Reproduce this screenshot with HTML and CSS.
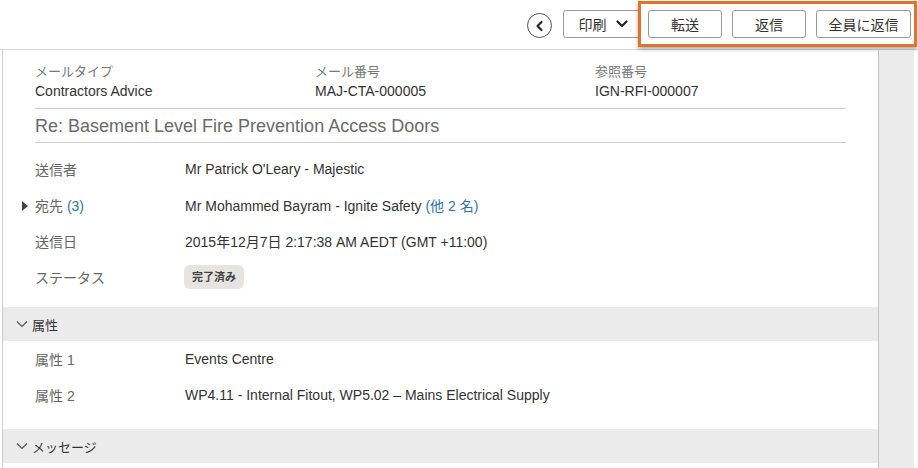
FILE: index.html
```html
<!DOCTYPE html>
<html lang="ja">
<head>
<meta charset="utf-8">
<link rel="stylesheet" href="styles.css">
</head>
<body>
<div class="toolbar">
  <button class="back" aria-label="戻る">
    <svg width="12" height="12" viewBox="0 0 12 12"><path d="M7.5 2 L3.5 6 L7.5 10" fill="none" stroke="#222" stroke-width="2.2" stroke-linecap="round" stroke-linejoin="round"/></svg>
  </button>
  <button class="btn print">印刷
    <svg width="12" height="10" viewBox="0 0 12 10"><path d="M1.5 2.5 L6 7 L10.5 2.5" fill="none" stroke="#222" stroke-width="2.2" stroke-linecap="round" stroke-linejoin="round"/></svg>
  </button>
  <div class="highlight">
    <button class="btn b-fwd">転送</button>
    <button class="btn b-reply">返信</button>
    <button class="btn b-all">全員に返信</button>
  </div>
</div>
<div class="main">
  <div class="panel">
    <div class="meta">
      <div class="meta-item"><div class="meta-label">メールタイプ</div><div class="meta-value">Contractors Advice</div></div>
      <div class="meta-item"><div class="meta-label">メール番号</div><div class="meta-value">MAJ-CTA-000005</div></div>
      <div class="meta-item"><div class="meta-label">参照番号</div><div class="meta-value">IGN-RFI-000007</div></div>
    </div>
    <div class="subject">Re: Basement Level Fire Prevention Access Doors</div>
    <div class="rows">
      <div class="row"><div class="label">送信者</div><div class="value">Mr Patrick O'Leary - Majestic</div></div>
      <div class="row"><div class="label"><span class="tri"></span>宛先 <span class="link">(3)</span></div><div class="value">Mr Mohammed Bayram - Ignite Safety <span class="link">(他 2 名)</span></div></div>
      <div class="row"><div class="label">送信日</div><div class="value">2015年12月7日 2:17:38 AM AEDT (GMT +11:00)</div></div>
      <div class="row"><div class="label">ステータス</div><div class="value"><span class="badge">完了済み</span></div></div>
    </div>
    <div class="section">
      <svg width="12" height="8" viewBox="0 0 12 8"><path d="M1 1.5 L6 6.5 L11 1.5" fill="none" stroke="#555" stroke-width="1.2"/></svg>
      <span>属性</span>
    </div>
    <div class="rows attrs">
      <div class="row"><div class="label">属性 1</div><div class="value">Events Centre</div></div>
      <div class="row"><div class="label">属性 2</div><div class="value">WP4.11 - Internal Fitout, WP5.02 – Mains Electrical Supply</div></div>
    </div>
    <div class="section">
      <svg width="12" height="8" viewBox="0 0 12 8"><path d="M1 1.5 L6 6.5 L11 1.5" fill="none" stroke="#555" stroke-width="1.2"/></svg>
      <span>メッセージ</span>
    </div>
  </div>
  <div class="side"></div>
</div>
</body>
</html>
```
FILE: styles.css
```css
* { box-sizing: border-box; }
html, body { margin: 0; padding: 0; background: #fff; overflow: hidden; }
body {
  width: 918px; height: 468px;
  font-family: "Liberation Sans", "Noto Sans CJK JP", Arial, sans-serif;
  color: #333;
  font-size: 14px;
}
button { font-family: inherit; margin: 0; }
.toolbar {
  height: 50px;
  border-bottom: 1px solid #d6d6d6;
  display: flex;
  justify-content: flex-end;
  align-items: flex-start;
  padding-right: 1px;
}
.back {
  width: 25px; height: 25px;
  margin-top: 13px;
  border: 1px solid #555;
  border-radius: 50%;
  background: #fff;
  display: flex; align-items: center; justify-content: center;
  padding: 0;
  margin-right: 11px;
}
.btn {
  height: 28px;
  margin-top: 10px;
  background: #fff;
  border: 1px solid #9a9a9a;
  border-radius: 3px;
  font-size: 14px;
  color: #333;
  display: flex; align-items: center; justify-content: center;
  padding: 0;
}
.print { width: 77px; gap: 9px; padding-left: 3px; }
.highlight {
  margin-left: -2px;
  margin-top: 1px;
  border: 3px solid #e0742b;
  box-shadow: 0 2px 4px rgba(0,0,0,0.35);
  display: flex;
  gap: 10px;
  padding: 0 3px 6px 7px;
  height: 46px;
  background: #fff;
}
.highlight .btn { margin-top: 6px; }
.b-fwd { width: 74px; }
.b-reply { width: 74px; }
.b-all { width: 95px; }

.main { display: flex; height: 418px; }
.panel {
  margin-left: 2px;
  border-left: 1px solid #cfcfcf;
  width: 876px;
  flex: none;
}
.side {
  width: 36px;
  background: #ebebeb;
  border-left: 1px solid #c4c4c4;
}
.meta {
  display: grid;
  grid-template-columns: 280px 280px 1fr;
  margin: 0 32px;
  padding: 14px 0 7px;
  border-bottom: 1px solid #cfcfcf;
}
.meta-label { font-size: 13px; color: #777; line-height: 16px; }
.meta-value { font-size: 14px; color: #333; line-height: 19px; margin-top: 2px; }
.subject {
  margin: 0 32px;
  padding: 6px 0 5px;
  font-size: 18px;
  line-height: 22px;
  color: #6a6a6a;
  border-bottom: 1px solid #cfcfcf;
}
.rows { padding: 8px 0 12px 32px; }
.row { display: flex; height: 36px; align-items: center; }
.label { width: 150px; color: #666; font-size: 14px; }
.value { color: #333; font-size: 14px; }
.link { color: #2f74a8; }
.tri {
  display: inline-block;
  width: 0; height: 0;
  border-left: 6px solid #444;
  border-top: 5px solid transparent;
  border-bottom: 5px solid transparent;
  margin-left: -13px;
  margin-right: 7px;
  vertical-align: 0px;
}
.badge {
  display: inline-block;
  background: #e6e4e1;
  border-radius: 6px;
  font-size: 11px;
  font-weight: bold;
  color: #444;
  padding: 0 8px;
  line-height: 24px;
  margin-left: -1px;
}
.section {
  height: 34px;
  background: #ebebeb;
  display: flex;
  align-items: center;
  padding-left: 13px;
  gap: 4px;
  font-size: 13px;
  color: #333;
}
.attrs { padding: 0 0 16px 32px; }
```
